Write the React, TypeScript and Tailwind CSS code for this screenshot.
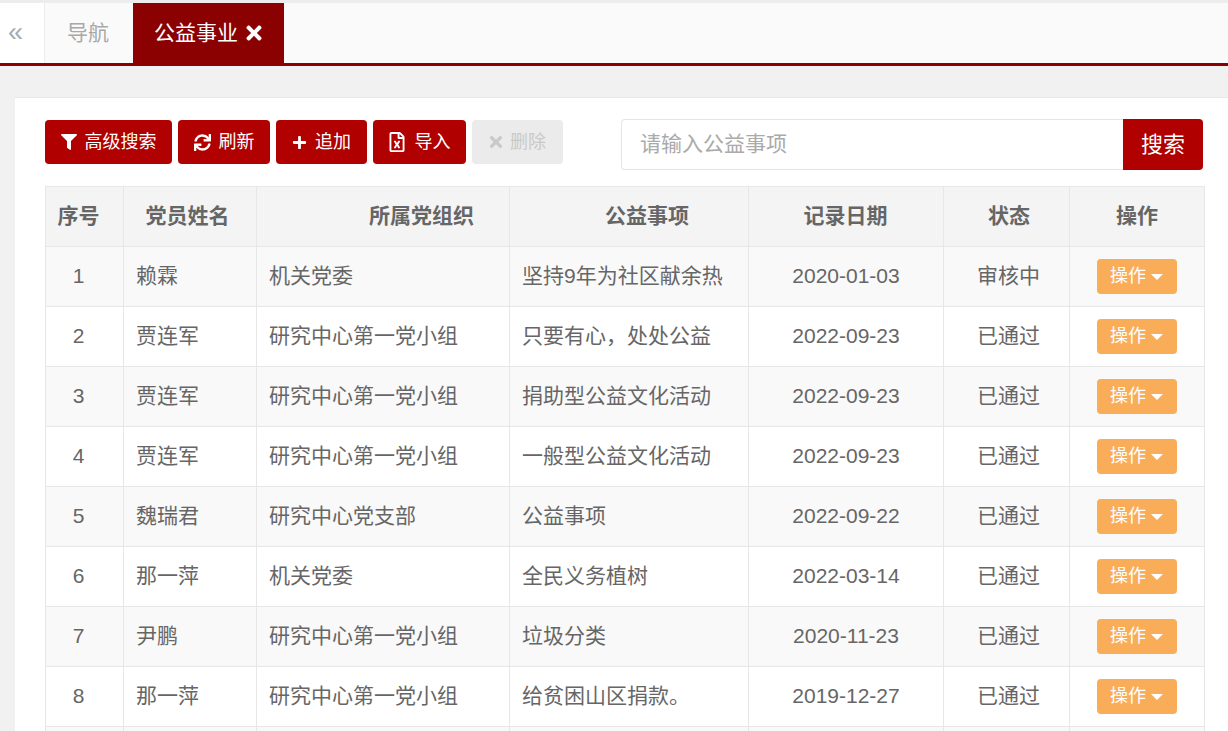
import { FaFilter, FaPlus, FaRegFileExcel, FaSync, FaTimes } from 'react-icons/fa'

const font = { fontFamily: '"Liberation Sans", "Noto Sans CJK SC", sans-serif' }

const rows = [
  { id: 1, name: '赖霖', org: '机关党委', item: '坚持9年为社区献余热', date: '2020-01-03', status: '审核中' },
  { id: 2, name: '贾连军', org: '研究中心第一党小组', item: '只要有心，处处公益', date: '2022-09-23', status: '已通过' },
  { id: 3, name: '贾连军', org: '研究中心第一党小组', item: '捐助型公益文化活动', date: '2022-09-23', status: '已通过' },
  { id: 4, name: '贾连军', org: '研究中心第一党小组', item: '一般型公益文化活动', date: '2022-09-23', status: '已通过' },
  { id: 5, name: '魏瑞君', org: '研究中心党支部', item: '公益事项', date: '2022-09-22', status: '已通过' },
  { id: 6, name: '那一萍', org: '机关党委', item: '全民义务植树', date: '2022-03-14', status: '已通过' },
  { id: 7, name: '尹鹏', org: '研究中心第一党小组', item: '垃圾分类', date: '2020-11-23', status: '已通过' },
  { id: 8, name: '那一萍', org: '研究中心第一党小组', item: '给贫困山区捐款。', date: '2019-12-27', status: '已通过' },
]

const gridCols = 'grid grid-cols-[78px_133px_253px_239px_195px_126px_135px]'
const cell = 'flex items-center border-r border-[#e7e7e7] px-3 pb-[2px] truncate'
const line = 'border-r border-[#e7e7e7]'

const ToolButton = ({ icon, label, width }: { icon: React.ReactNode; label: string; width: string }) => (
  <button type="button" className={`flex h-[44px] items-center justify-center gap-[8px] rounded bg-[#b00000] text-[18px] text-white ${width}`}>
    {icon}
    {label}
  </button>
)

export default function App() {
  return (
    <div className="h-[731px] w-[1228px] overflow-hidden bg-[#f1f1f1]" style={font}>
      <div className="bg-[#ededed] pt-[3px]">
        <div className="flex h-[63px] border-b-[3px] border-[#8b0000] bg-[#fafafa]">
          <div className="flex w-[45px] items-center border-r border-[#ececec] bg-white pl-[8px] pb-[2px] text-[27px] leading-none text-[#aaaaaa]">
            «
          </div>
          <div className="flex w-[88px] items-center justify-center pr-[2px] text-[21px] text-[#a9a9a9]">导航</div>
          <div className="flex w-[151px] items-center justify-center gap-[5px] bg-[#8b0000] pl-[2px] text-[21px] text-white">
            公益事业
            <FaTimes className="size-[22px]" />
          </div>
        </div>
      </div>

      <div className="ml-[15px] mt-[31px] h-[700px] border-t border-[#e7e7e7] bg-white pl-[30px] pr-[23px] pt-[21px]">
        <div className="flex items-start">
          <div className="mt-px flex gap-[6px]">
            <ToolButton icon={<FaFilter className="size-[16px]" />} label="高级搜索" width="w-[127px]" />
            <ToolButton icon={<FaSync className="size-[17px]" />} label="刷新" width="w-[92px]" />
            <ToolButton icon={<FaPlus className="size-[15px]" />} label="追加" width="w-[91px]" />
            <ToolButton icon={<FaRegFileExcel className="size-[20px]" />} label="导入" width="w-[93px] pr-[2px]" />
            <button type="button" className="flex h-[44px] w-[91px] items-center justify-center gap-[5px] rounded bg-[#ebebeb] pr-[2px] text-[18px] text-[#c9c9c9]">
              <FaTimes className="size-[18px]" />
              删除
            </button>
          </div>
          <div className="ml-[58px] flex h-[51px] w-[582px]">
            <div className="flex flex-1 items-center rounded-l border border-r-0 border-[#e5e5e5] pb-[2px] pl-[18px] text-[21px] text-[#aaaaaa]">
              请输入公益事项
            </div>
            <div className="flex w-[80px] items-center justify-center rounded-r bg-[#b00000] text-[22px] text-white">搜索</div>
          </div>
        </div>

        <div className="mt-[16px] w-[1160px] border-l border-t border-[#e7e7e7] text-[21px] text-[#666666]">
          <div className={`${gridCols} h-[60px] border-b border-[#e7e7e7] bg-[#f4f4f4] font-bold text-[#666666]`}>
            <div className={`${cell} justify-center !pl-0`}>序号</div>
            <div className={`${cell} justify-center !pr-[17px]`}>党员姓名</div>
            <div className={`${cell} pl-[112px]`}>所属党组织</div>
            <div className={`${cell} pl-[95px]`}>公益事项</div>
            <div className={`${cell} justify-center !pr-[13px]`}>记录日期</div>
            <div className={`${cell} justify-center !pl-[17px]`}>状态</div>
            <div className={`${cell} justify-center`}>操作</div>
          </div>
          {rows.map((row, i) => (
            <div key={row.id} className={`${gridCols} h-[60px] border-b border-[#e7e7e7] ${i % 2 === 0 ? 'bg-[#f9f9f9]' : 'bg-white'}`}>
              <div className={`${cell} justify-center !pl-0`}>{row.id}</div>
              <div className={cell}>{row.name}</div>
              <div className={cell}>{row.org}</div>
              <div className={cell}>{row.item}</div>
              <div className={`${cell} justify-center`}>{row.date}</div>
              <div className={`${cell} justify-center !pl-[16px]`}>{row.status}</div>
              <div className={`${cell} justify-center !pb-0 !pr-[13px]`}>
                <button type="button" className="flex h-[35px] w-[80px] shrink-0 items-center justify-center gap-[5px] rounded bg-[#f9ad59] text-[18px] text-white">
                  操作
                  <span className="border-x-[6px] border-t-[6px] border-x-transparent border-t-white" />
                </button>
              </div>
            </div>
          ))}
          <div className={`${gridCols} h-[60px] bg-[#f9f9f9]`}>
            <div className={line} />
            <div className={line} />
            <div className={line} />
            <div className={line} />
            <div className={line} />
            <div className={line} />
            <div className={line} />
          </div>
        </div>
      </div>
    </div>
  )
}
